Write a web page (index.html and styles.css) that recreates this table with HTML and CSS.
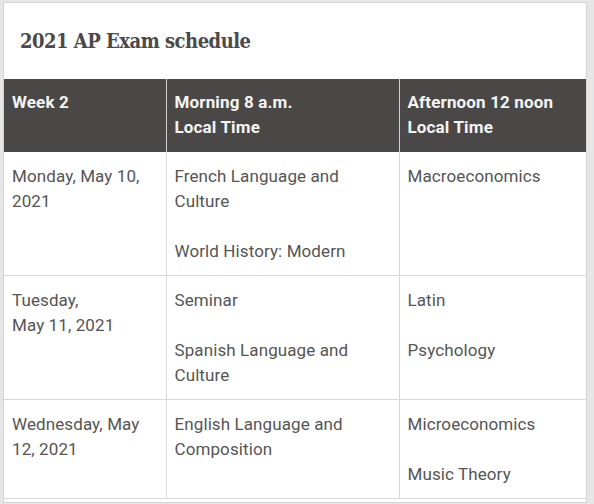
FILE: index.html
```html
<!DOCTYPE html>
<html lang="en">
  <head>
    <meta charset="UTF-8" />
    <meta name="viewport" content="width=device-width, initial-scale=1.0" />
    <title>2021 AP Exam schedule</title>
    <link rel="stylesheet" href="styles.css">
  </head>
  <body>
    <div class="card">
      <h1 class="title">2021 AP Exam schedule</h1>

      <table class="schedule">
        <colgroup>
          <col class="col-day" />
          <col class="col-morning" />
          <col class="col-afternoon" />
        </colgroup>
        <thead>
          <tr>
            <th>Week 2</th>
            <th>Morning 8 a.m.<br />Local Time</th>
            <th>Afternoon 12 noon<br />Local Time</th>
          </tr>
        </thead>
        <tbody>
          <tr>
            <td><p>Monday, May 10, 2021</p></td>
            <td>
              <p>French Language and Culture</p>
              <p>World History: Modern</p>
            </td>
            <td><p>Macroeconomics</p></td>
          </tr>
          <tr>
            <td><p>Tuesday,<br />May 11, 2021</p></td>
            <td>
              <p>Seminar</p>
              <p>Spanish Language and Culture</p>
            </td>
            <td>
              <p>Latin</p>
              <p>Psychology</p>
            </td>
          </tr>
          <tr>
            <td><p>Wednesday, May 12, 2021</p></td>
            <td><p>English Language and Composition</p></td>
            <td>
              <p>Microeconomics</p>
              <p>Music Theory</p>
            </td>
          </tr>
        </tbody>
      </table>
    </div>
  </body>
</html>
```

FILE: styles.css
```css
body {
  margin: 0;
  padding: 2px 0 0 3px;
  background-color: #e6e6e6;
  font-family: 'Roboto', 'Liberation Sans', sans-serif;
  overflow: hidden;
}

.card {
  width: 582px;
  padding-bottom: 3px;
  background-color: white;
  border: 1px solid #d4d4d4;
}

.title {
  margin: 0;
  height: 76px;
  padding-left: 16px;
  display: flex;
  align-items: center;
  font-family: 'DejaVu Serif', 'Liberation Serif', serif;
  font-stretch: condensed;
  font-size: 20px;
  font-weight: bold;
  letter-spacing: -0.5px;
  color: #4a4a4a;
}

.schedule {
  width: 100%;
  border-collapse: collapse;
  table-layout: fixed;
  font-size: 17px;
  line-height: 25px;
  letter-spacing: 0.1px;
}

.col-day {
  width: 162px;
}

.col-morning {
  width: 233px;
}

.schedule th {
  background-color: #4a4847;
  color: #f4f4f4;
  font-weight: bold;
  letter-spacing: 0.15px;
  text-align: left;
  vertical-align: top;
  padding: 11px 8px 12px 8px;
  border-left: 1px solid #d0d0d0;
}

.schedule th:first-child,
.schedule td:first-child {
  border-left: none;
}

.schedule td {
  color: #555;
  vertical-align: top;
  padding: 12px 8px 11px 8px;
  border-left: 1px solid #d8d8d8;
  border-bottom: 1px solid #d8d8d8;
}

.schedule p {
  margin: 0 0 25px 0;
}

.schedule p:last-child {
  margin-bottom: 0;
}
```
